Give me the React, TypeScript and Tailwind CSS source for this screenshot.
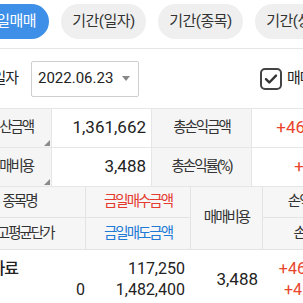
import React from "react";

const font = { fontFamily: "Roboto, 'Noto Sans CJK KR', sans-serif" };

const Tabs = () => (
  <div className="h-[49px] border-b border-[#e6e6e6] flex items-start pt-[4px] gap-[12px] ml-[-30px] w-[420px]">
    <div className="w-[79px] h-[35px] shrink-0 rounded-full bg-[#3d8fe8] text-white text-[15px] tracking-[-0.5px] flex items-center justify-center">당일매매</div>
    {["기간(일자)", "기간(종목)", "기간(상세)"].map((t) => (
      <div key={t} className="w-[85px] h-[35px] shrink-0 rounded-full bg-[#efefef] text-[#333] text-[15px] tracking-[-0.5px] flex items-center justify-center">{t}</div>
    ))}
  </div>
);

const DateRow = () => (
  <div className="h-[59px] flex items-center ml-[-42px] w-[420px]">
    <span className="w-[60px] text-right text-[15px] tracking-[-1px] text-[#222]">매매일자</span>
    <div className="ml-[13px] w-[108px] h-[36px] border border-[#cfcfcf] rounded-[2px] flex items-center pl-[6px] pr-[8px]">
      <span className="text-[15px] text-[#222]">2022.06.23</span>
      <svg className="ml-auto" width="8" height="5" viewBox="0 0 8 5"><path d="M0 0h8L4 5z" fill="#888" /></svg>
    </div>
    <div className="ml-[121px] w-[22px] h-[22px] border-2 border-[#444] rounded-[5px] flex items-center justify-center">
      <svg width="14" height="12" viewBox="0 0 14 12"><path d="M2 6.2l3.3 3.3L12 2.6" fill="none" stroke="#333" strokeWidth="2.4" strokeLinecap="round" strokeLinejoin="round" /></svg>
    </div>
    <span className="ml-[5px] text-[15px] tracking-[-1px] text-[#222]">매매비용포함</span>
  </div>
);

const lbl = "text-[14.5px] tracking-[-2px] text-[#333]";

const Label = ({ children, last }: { children: React.ReactNode; last?: boolean }) => (
  <div className={`relative bg-[#f5f5f5] border-r border-[#e6e6e6] ${last ? "" : "border-b"} flex items-center justify-center pl-[18px] ${lbl}`}>
    {children}
    <span className="absolute right-[1px] bottom-[1px] w-0 h-0 border-l-[6px] border-l-transparent border-b-[6px] border-b-[#8a8a8a]" />
  </div>
);

const Value = ({ children, red, last }: { children: React.ReactNode; red?: boolean; last?: boolean }) => (
  <div className={`border-r border-[#e6e6e6] ${last ? "" : "border-b"} flex items-center justify-end pr-[5px] text-[17px] ${red ? "text-[#e8452c]" : "text-[#222]"}`}>
    {children}
  </div>
);

const Summary = () => (
  <div className="grid grid-cols-[100px_100px_100px_91px] grid-rows-[39px_38px] border-t border-b border-[#e6e6e6] ml-[-48px] w-[391px]">
    <Label>정산금액</Label>
    <Value>1,361,662</Value>
    <div className={`bg-[#f5f5f5] border-r border-b border-[#e6e6e6] flex items-center justify-center ${lbl}`}>총손익금액</div>
    <Value red>+46,100</Value>
    <Label last>매매비용</Label>
    <Value last>3,488</Value>
    <div className={`bg-[#f5f5f5] border-r border-[#e6e6e6] flex items-center justify-center ${lbl}`}>총손익률(%)</div>
    <Value red last>+4.02</Value>
  </div>
);

const head = `bg-[#f6f6f6] border-r border-[#e3e3e3] flex items-center justify-center ${lbl}`;

const Trades = () => (
  <div className="ml-[-46px] w-[405px]">
    <div className="grid grid-cols-[132px_105px_72px_96px] grid-rows-[31px_31px] border-b border-[#e3e3e3]">
      <div className={`${head} border-b`}>종목명</div>
      <div className={`${head} border-b !text-[#e53a2f]`}>금일매수금액</div>
      <div className={`${head} row-span-2`}>매매비용</div>
      <div className={`${head} border-b`}>손익금액</div>
      <div className={head}>잔고평균단가</div>
      <div className={`${head} !text-[#1f7ad6]`}>금일매도금액</div>
      <div className={head}>손익률</div>
    </div>
    <div className="grid grid-cols-[132px_105px_72px_96px] h-[56px] pt-[8px] text-[16px] leading-[21px]">
      <div className="flex flex-col pr-[1px]">
        <span className="font-medium text-[#222] text-[16px] tracking-[-1px] ml-[-12px] w-[76px] text-right">한국사료</span>
        <span className="text-right text-[#222]">0</span>
      </div>
      <div className="flex flex-col items-end pr-[6px] text-[#222]">
        <span>117,250</span>
        <span>1,482,400</span>
      </div>
      <div className="flex items-center justify-end pr-[5px] text-[17px] text-[#222] pb-[6px]">3,488</div>
      <div className="flex flex-col items-end pr-[23px] text-[#e8452c]">
        <span>+46,100</span>
        <span>+4.02%</span>
      </div>
    </div>
  </div>
);

export default function App() {
  return (
    <div className="w-[303px] h-[303px] overflow-hidden bg-white" style={font}>
      <Tabs />
      <DateRow />
      <Summary />
      <Trades />
    </div>
  );
}
